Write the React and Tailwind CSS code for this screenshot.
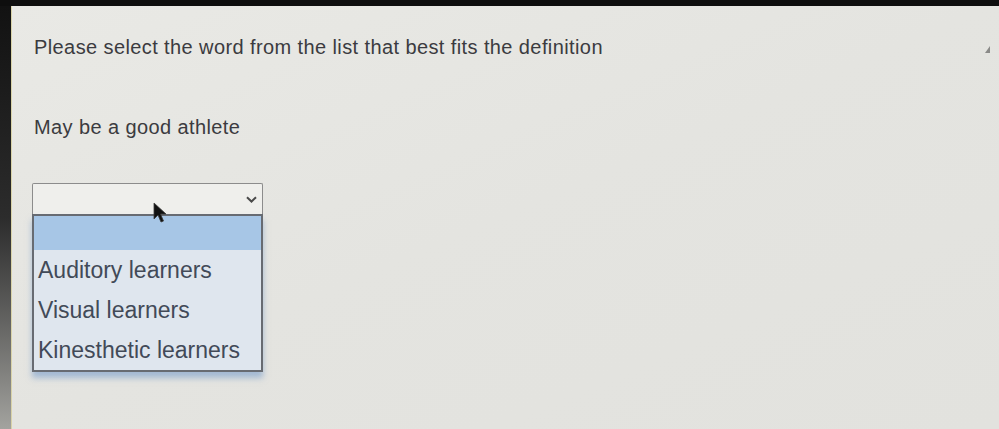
const OPTIONS = ["Auditory learners", "Visual learners", "Kinesthetic learners"];

function Cursor() {
  return (
    <svg
      className="absolute left-[141px] top-[196px]"
      width="14"
      height="22"
      viewBox="0 0 14 22"
    >
      <path
        d="M1 1 L1 17 L5 13 L8 20 L10.5 19 L7.5 12 L13 12 Z"
        fill="#111"
        stroke="#3a3a3a"
        strokeWidth="0.8"
        strokeLinejoin="round"
      />
    </svg>
  );
}

export default function App() {
  return (
    <div
      className="h-[429px] w-[999px] overflow-hidden bg-[#101010] flex flex-col"
      style={{ fontFamily: '"Liberation Sans", Arial, sans-serif' }}
    >
      <div className="h-[6px] bg-[#0e0e0e]" />
      <div className="flex flex-1">
        <div className="w-[11px] bg-gradient-to-b from-[#121212] via-[#2c2c2c] to-[#a3a39f]" />
        <div className="relative flex-1 bg-gradient-to-br from-[#e9e9e5] via-[#e4e4e0] to-[#e2e2de] pl-[20px] pt-[30px] border-l border-[#d9d3a8]">
          <p className="ml-[2px] text-[20px] leading-[23px] text-[#3b3b40] tracking-[0.4px]">
            Please select the word from the list that best fits the definition
          </p>
          <p className="ml-[2px] mt-[57px] text-[20px] leading-[23px] text-[#3b3b40] tracking-[0.4px]">
            May be a good athlete
          </p>

          <div className="mt-[44px] w-[231px]">
            <div className="h-[31px] border border-[#8c8c8c] border-b-0 bg-[#efefec] rounded-t-[2px] flex items-center justify-end pr-[5px]">
              <svg width="11" height="7" viewBox="0 0 11 7">
                <path
                  d="M1 1.2 L5.5 5.5 L10 1.2"
                  fill="none"
                  stroke="#4a4a4a"
                  strokeWidth="2"
                />
              </svg>
            </div>
            <div className="border-2 border-[#676b72] bg-[#dfe6ee] shadow-[0_6px_6px_rgba(110,150,200,0.55)]">
              <div className="h-[34px] bg-[#a7c6e6]" />
              {OPTIONS.map((opt) => (
                <div
                  key={opt}
                  className="h-[40px] flex items-center pl-[4px] text-[23px] text-[#424a58]"
                >
                  {opt}
                </div>
              ))}
            </div>
          </div>

          <Cursor />

          <svg
            className="absolute left-[973px] top-[40px]"
            width="6"
            height="7"
            viewBox="0 0 6 7"
          >
            <path d="M5 0 L5 7 L0 7 Z" fill="#8a8a88" />
          </svg>
        </div>
      </div>
    </div>
  );
}
